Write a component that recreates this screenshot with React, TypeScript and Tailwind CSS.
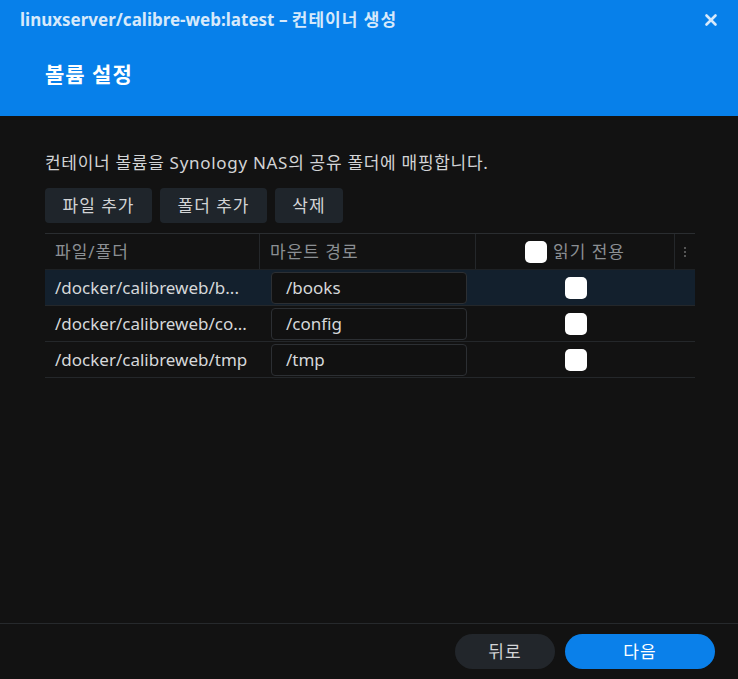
import { X } from "lucide-react";

const rows = [
  { path: "/docker/calibreweb/b...", mount: "/books", active: true },
  { path: "/docker/calibreweb/co...", mount: "/config", active: false },
  { path: "/docker/calibreweb/tmp", mount: "/tmp", active: false },
];

function Box() {
  return <div className="h-[22px] w-[22px] rounded-[5px] bg-white" />;
}

export default function App() {
  return (
    <div
      className="flex h-[679px] w-[738px] flex-col bg-[#121212] text-[#d4d6d8]"
      style={{ fontFamily: '"Noto Sans", "Noto Sans CJK KR", sans-serif' }}
    >
      <header className="h-[116px] bg-[#0780ea] px-5">
        <div className="flex h-[40px] items-center justify-between">
          <span className="text-[17px] font-bold text-[#d6e9fb]">
            linuxserver/calibre-web:latest – <span className="tracking-[1px]">컨테이너 생성</span>
          </span>
          <X className="mr-[-2px] h-[18px] w-[18px] text-[#d6e9fb]" strokeWidth={3.5} />
        </div>
        <h1 className="mt-[19px] pl-[25px] text-[21px] font-bold tracking-[1px] text-white">볼륨 설정</h1>
      </header>

      <main className="flex-1 px-[45px] pt-[34px]">
        <p className="text-[17px] leading-[26px] tracking-[0.7px] text-[#d2d4d6]">
          컨테이너 볼륨을 Synology NAS의 공유 폴더에 매핑합니다.
        </p>
        <div className="mt-[12px] flex gap-2 tracking-[1px]">
          <button className="h-[35px] w-[107px] rounded-[4px] bg-[#1f252b] text-[17px] text-[#d2d4d6]">
            파일 추가
          </button>
          <button className="h-[35px] w-[107px] rounded-[4px] bg-[#1f252b] text-[17px] text-[#d2d4d6]">
            폴더 추가
          </button>
          <button className="h-[35px] w-[68px] rounded-[4px] bg-[#1f252b] text-[17px] text-[#d2d4d6]">
            삭제
          </button>
        </div>

        <div className="mt-[10px] w-[650px] border-t border-[#2a2d30] text-[17px]">
          <div className="grid h-[36px] grid-cols-[215px_216px_199px_20px] items-center border-b border-[#1e2124] tracking-[1px] text-[#8b8f93]">
            <div className="flex h-full items-center border-r border-[#24272a] px-[10px]">파일/폴더</div>
            <div className="flex h-full items-center border-r border-[#24272a] px-[10px]">마운트 경로</div>
            <div className="flex h-full items-center justify-center gap-[6px] border-r border-[#24272a]">
              <Box />
              <span>읽기 전용</span>
            </div>
            <div className="flex h-full flex-col items-center justify-center gap-[2px]">
              <span className="h-[2px] w-[2px] bg-[#555]" />
              <span className="h-[2px] w-[2px] bg-[#555]" />
              <span className="h-[2px] w-[2px] bg-[#555]" />
            </div>
          </div>
          {rows.map((r) => (
            <div
              key={r.mount}
              className={`grid h-[36px] grid-cols-[215px_216px_219px] items-center border-b border-[#24272a] ${
                r.active ? "bg-[#13202d]" : ""
              }`}
            >
              <div className="truncate px-[10px] text-[#d6d8da]">{r.path}</div>
              <div className="px-[11px]">
                <div className="flex h-[32px] w-[196px] items-center rounded-[4px] border border-[#2c2f33] bg-[#111111] px-[14px] text-[#d6d8da]">
                  {r.mount}
                </div>
              </div>
              <div className="flex justify-center pr-[20px]">
                <Box />
              </div>
            </div>
          ))}
        </div>
      </main>

      <footer className="flex h-[56px] items-center justify-end gap-[10px] border-t border-[#26292c] px-[23px] tracking-[1px]">
        <button className="h-[35px] w-[100px] rounded-full bg-[#22262b] text-[17px] text-[#d2d4d6]">
          뒤로
        </button>
        <button className="h-[35px] w-[150px] rounded-full bg-[#0a80ea] text-[17px] text-white">
          다음
        </button>
      </footer>
    </div>
  );
}
